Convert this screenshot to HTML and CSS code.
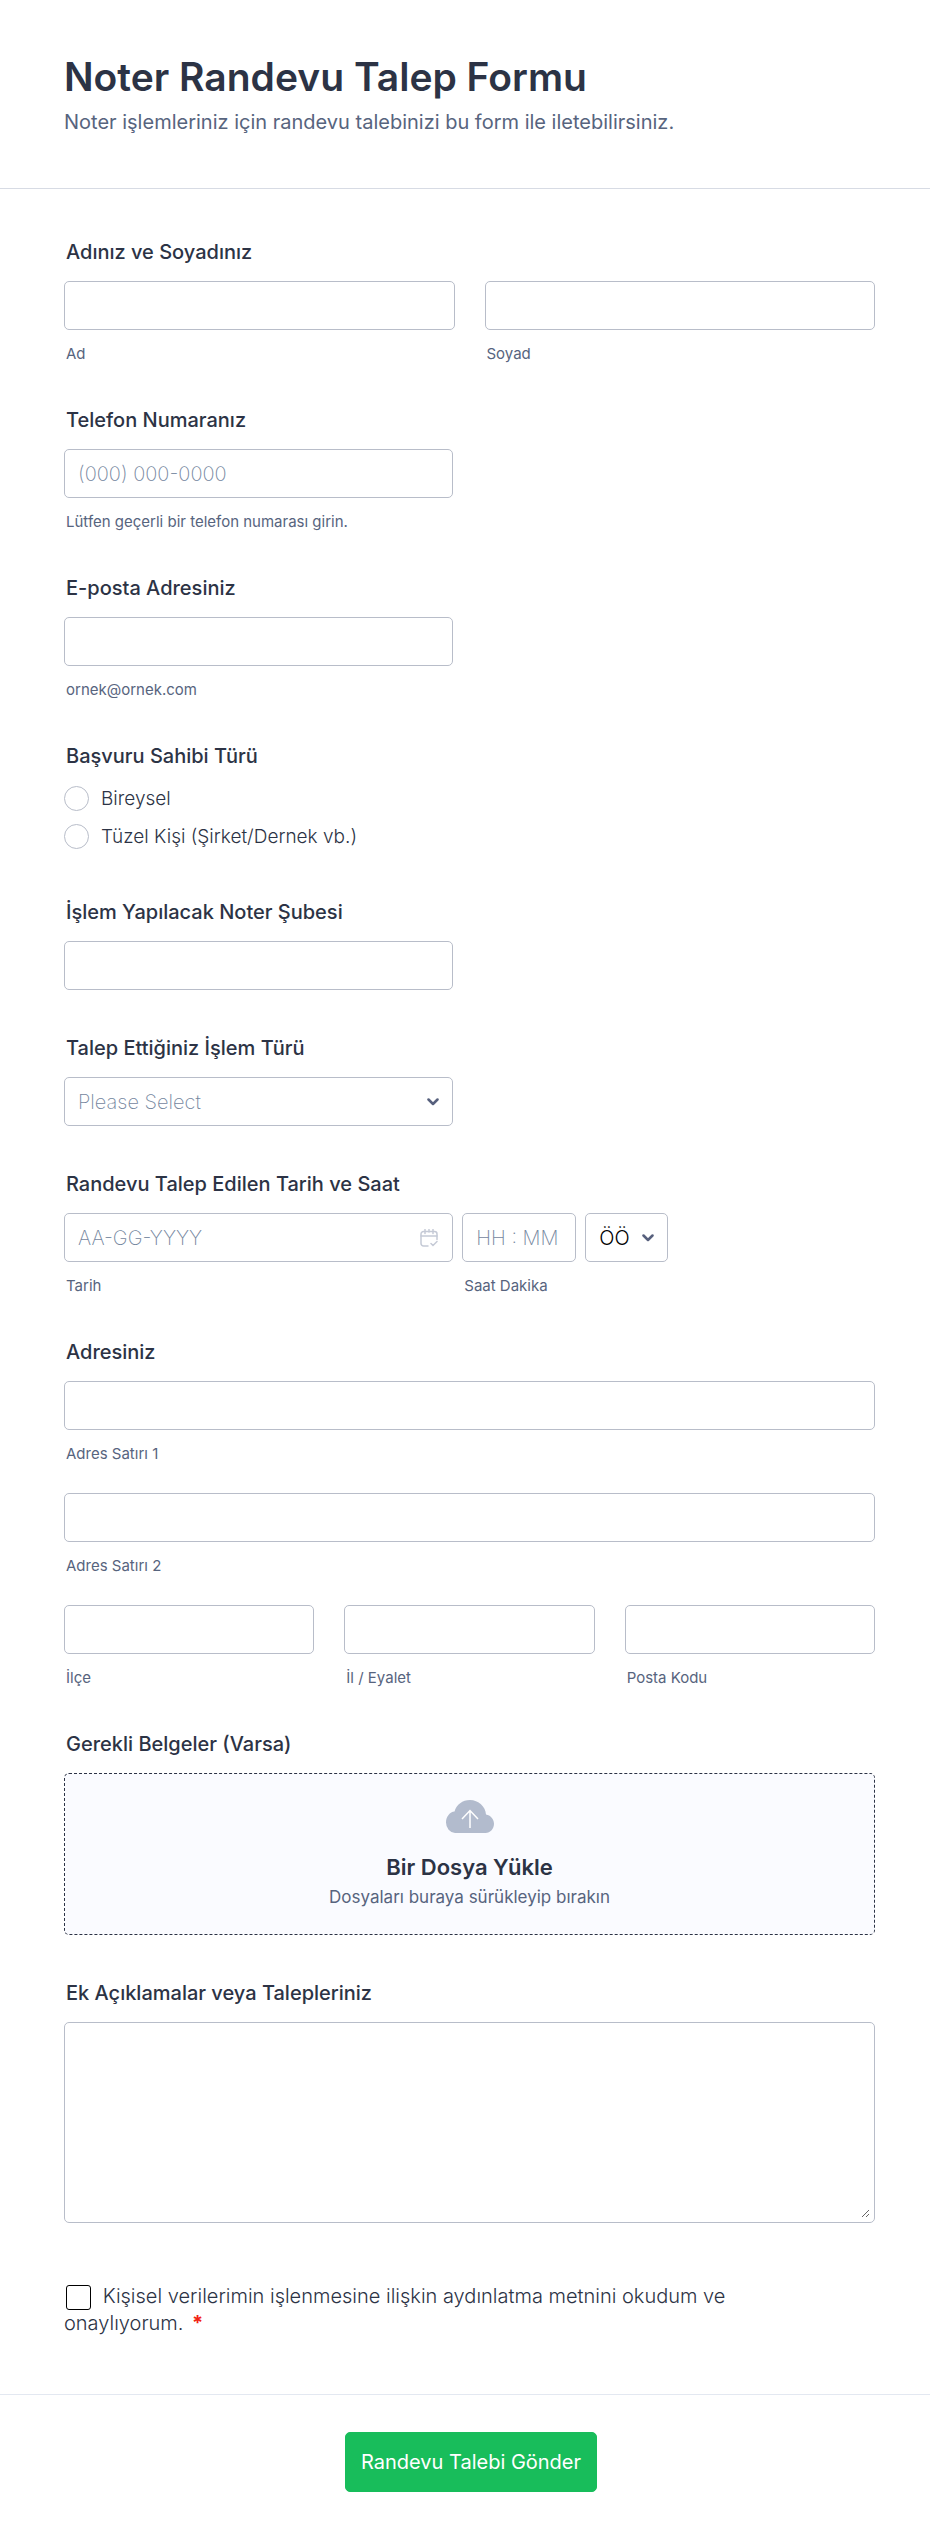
FILE: index.html
```
<!DOCTYPE html>
<html lang="tr">
<head>
  <meta charset="UTF-8" />
  <meta name="viewport" content="width=device-width, initial-scale=1" />
  <title>Noter Randevu Talep Formu</title>
  <link rel="stylesheet" href="styles.css">
</head>
<body>

  <form class="form" novalidate>
    <header class="form-header">
      <h1>Noter Randevu Talep Formu</h1>
      <p>Noter işlemleriniz için randevu talebinizi bu form ile iletebilirsiniz.</p>
    </header>

    <div class="form-body">
      <fieldset class="field">
        <legend class="field-label">Adınız ve Soyadınız</legend>
        <div class="row cols-2">
          <div>
            <input class="control" type="text" id="firstName" />
            <label class="sub-label" for="firstName">Ad</label>
          </div>
          <div>
            <input class="control" type="text" id="lastName" />
            <label class="sub-label" for="lastName">Soyad</label>
          </div>
        </div>
      </fieldset>

      <div class="field">
        <label class="field-label" for="phone">Telefon Numaranız</label>
        <input class="control half" type="tel" id="phone" placeholder="(000) 000-0000" />
        <label class="sub-label" for="phone">Lütfen geçerli bir telefon numarası girin.</label>
      </div>

      <div class="field">
        <label class="field-label" for="email">E-posta Adresiniz</label>
        <input class="control half" type="email" id="email" />
        <label class="sub-label" for="email">ornek@ornek.com</label>
      </div>

      <fieldset class="field">
        <legend class="field-label">Başvuru Sahibi Türü</legend>
        <div class="options">
          <label class="option"><input type="radio" name="applicant" value="bireysel" /> Bireysel</label>
          <label class="option"><input type="radio" name="applicant" value="tuzel" /> Tüzel Kişi (Şirket/Dernek vb.)</label>
        </div>
      </fieldset>

      <div class="field">
        <label class="field-label" for="branch">İşlem Yapılacak Noter Şubesi</label>
        <input class="control half" type="text" id="branch" />
      </div>

      <div class="field">
        <label class="field-label" for="service">Talep Ettiğiniz İşlem Türü</label>
        <div class="icon-wrap half">
          <select class="control muted" id="service">
            <option>Please Select</option>
          </select>
          <svg class="chevron" viewBox="0 0 12 8"><path d="M1.5 1.5 6 6l4.5-4.5" /></svg>
        </div>
      </div>

      <fieldset class="field">
        <legend class="field-label">Randevu Talep Edilen Tarih ve Saat</legend>
        <div class="row when">
          <div>
            <div class="icon-wrap">
              <input class="control" type="text" id="date" placeholder="AA-GG-YYYY" />
              <svg class="calendar" viewBox="0 0 18 18">
                <path d="M8 17H3.5A2.5 2.5 0 0 1 1 14.5V5a2.5 2.5 0 0 1 2.5-2.5h11A2.5 2.5 0 0 1 17 5v5.500" />
                <path d="M1 7h16M5 .5v4M9 .5v2.500M13 .5v4M11 14.500l2 2 4-4" />
              </svg>
            </div>
            <label class="sub-label" for="date">Tarih</label>
          </div>
          <div>
            <input class="control" type="text" id="time" placeholder="HH : MM" />
            <label class="sub-label" for="time">Saat Dakika</label>
          </div>
          <div class="icon-wrap">
            <select class="control" id="period" aria-label="ÖÖ / ÖS">
              <option>ÖÖ</option>
              <option>ÖS</option>
            </select>
            <svg class="chevron" viewBox="0 0 12 8"><path d="M1.5 1.5 6 6l4.5-4.5" /></svg>
          </div>
        </div>
      </fieldset>

      <fieldset class="field">
        <legend class="field-label">Adresiniz</legend>
        <div class="address">
          <div>
            <input class="control" type="text" id="address1" />
            <label class="sub-label" for="address1">Adres Satırı 1</label>
          </div>
          <div>
            <input class="control" type="text" id="address2" />
            <label class="sub-label" for="address2">Adres Satırı 2</label>
          </div>
          <div class="row cols-3">
            <div>
              <input class="control" type="text" id="city" />
              <label class="sub-label" for="city">İlçe</label>
            </div>
            <div>
              <input class="control" type="text" id="state" />
              <label class="sub-label" for="state">İl / Eyalet</label>
            </div>
            <div>
              <input class="control" type="text" id="postal" />
              <label class="sub-label" for="postal">Posta Kodu</label>
            </div>
          </div>
        </div>
      </fieldset>

      <div class="field">
        <label class="field-label" for="files">Gerekli Belgeler (Varsa)</label>
        <button class="upload" type="button" id="files">
          <svg class="cloud" viewBox="0 0 48 33">
            <path class="cloud-shape" d="M9 33A9.5 10.5 0 0 1 0 22.5C0 16.5 4 12 8.500 11.500 10.500 4.500 16.500 0 24 0c8.500 0 15.500 6.500 16 14.500 4.500.8 8 4.500 8 9.200C48 28.500 44.500 33 39.500 33Z" />
            <path class="cloud-arrow" d="M24 28V10.500M16 19l8-8.500 8 8.500" />
          </svg>
          <span class="upload-title">Bir Dosya Yükle</span>
          <span class="upload-text">Dosyaları buraya sürükleyip bırakın</span>
        </button>
      </div>

      <div class="field">
        <label class="field-label" for="notes">Ek Açıklamalar veya Talepleriniz</label>
        <div class="notes-box">
          <textarea class="notes" id="notes"></textarea>
        </div>
      </div>

      <div class="consent">
        <input type="checkbox" id="consent" />
        <label for="consent">Kişisel verilerimin işlenmesine ilişkin aydınlatma metnini okudum ve onaylıyorum.</label>
        <span class="required">*</span>
      </div>
    </div>

    <footer class="form-footer">
      <button class="submit" type="submit">Randevu Talebi Gönder</button>
    </footer>
  </form>

</body>
</html>
```
FILE: styles.css
```
* {
  box-sizing: border-box;
}
body {
  margin: 0;
  background: #fff;
  color: #2c3345;
  font-family: Inter, sans-serif;
  font-size: 20px;
  line-height: 24px;
}
button, input, select, textarea {
  font: inherit;
  color: inherit;
}
.form-header {
  padding: 53px 55px 54px 64px;
  border-bottom: 1px solid #d7dbe4;
}
.form-header h1 {
  margin: 0;
  font-size: 39px;
  line-height: 48px;
  font-weight: 600;
}
.form-header p {
  margin: 9px 0 0;
  color: #57647e;
}
.form-body {
  padding: 51px 55px 57px 64px;
}
.field {
  margin: 0 0 46px;
  padding: 0;
  border: 0;
  min-width: 0;
}
.field-label {
  display: block;
  margin-bottom: 17px;
  padding: 0 2px;
  font-weight: 500;
}
.sub-label {
  display: block;
  margin-top: 15px;
  padding: 0 2px;
  font-size: 15px;
  line-height: 17px;
  color: #57647e;
}
.control {
  display: block;
  width: 100%;
  height: 49px;
  padding: 0 13px;
  border: 1px solid #b8bdc9;
  border-radius: 5px;
  background: #fff;
  color: #000;
  font-weight: 300;
  appearance: none;
}
.control::placeholder {
  color: #74869e;
  font-weight: 200;
  opacity: 1;
}
.control.muted {
  color: #74869e;
  font-weight: 200;
}
.half { width: 48%; }
.row {
  display: grid;
  gap: 30px;
}
.cols-2 { grid-template-columns: 1fr 1fr; }
.cols-3 { grid-template-columns: 1fr 1fr 1fr; }
.when {
  grid-template-columns: 48% 114px 83px;
  gap: 9px;
  align-items: start;
}
.address {
  display: grid;
  gap: 31px;
}

/* icons that lie over a control */
.icon-wrap { position: relative; }
.chevron, .calendar {
  position: absolute;
  fill: none;
  pointer-events: none;
}
.chevron {
  top: 21px;
  right: 14px;
  width: 12px;
  height: 8px;
  stroke: #57607d;
  stroke-width: 2.5;
  stroke-linecap: round;
  stroke-linejoin: round;
}
.calendar {
  top: 16px;
  right: 15px;
  width: 18px;
  height: 18px;
  stroke: #c5cad6;
  stroke-width: 1.5;
  stroke-linecap: round;
}

.options {
  display: grid;
  gap: 13px;
  padding: 1px 0 5px;
}
.option {
  display: flex;
  align-items: center;
  gap: 12px;
  height: 25px;
  font-size: 19px;
  font-weight: 300;
}
.option input {
  appearance: none;
  width: 25px;
  height: 25px;
  margin: 0;
  border: 1px solid #b8bdc9;
  border-radius: 50%;
  background: #fff;
}
.option input:checked { border: 8px solid #2e69ff; }

.upload {
  display: flex;
  flex-direction: column;
  align-items: center;
  width: 100%;
  padding: 26px 16px 25px;
  border: 1px dashed #2c3345;
  border-radius: 5px;
  background: #fafbff;
  cursor: pointer;
}
.cloud {
  width: 48px;
  height: 33px;
}
.cloud-shape { fill: #b2bbcd; }
.cloud-arrow { fill: none; stroke: #fff; stroke-width: 1.5; }
.upload-title {
  margin-top: 19px;
  font-size: 22px;
  line-height: 30px;
  font-weight: 600;
}
.upload-text {
  margin-top: 3px;
  font-size: 17px;
  color: #57647e;
}
.notes-box {
  padding: 4px;
  border: 1px solid #b8bdc9;
  border-radius: 5px;
  background: #fff;
}
.notes {
  display: block;
  width: 100%;
  height: 191px;
  padding: 8px 9px;
  border: 0;
  outline: none;
  background: transparent;
  font-weight: 300;
  resize: vertical;
}
.consent {
  max-width: 90%;
  margin-top: 60px;
  line-height: 27px;
  font-weight: 300;
}
.consent input {
  appearance: none;
  width: 25px;
  height: 25px;
  margin: 0 6px 0 2px;
  border: 1px solid #000;
  border-radius: 3px;
  background: #fff;
  vertical-align: middle;
}
.consent input:checked { background: #2e69ff; }
.required {
  margin-left: 3px;
  color: #f22314;
  font-weight: 700;
}

.form-footer {
  display: flex;
  justify-content: center;
  padding: 37px 48px 49px 60px;
  border-top: 1px solid #e3e8f1;
}
.submit {
  min-width: 252px;
  height: 60px;
  padding: 0 15px;
  border: 1px solid #18bd5b;
  border-radius: 5px;
  background: #18bd5b;
  color: #fff;
  cursor: pointer;
}
```
